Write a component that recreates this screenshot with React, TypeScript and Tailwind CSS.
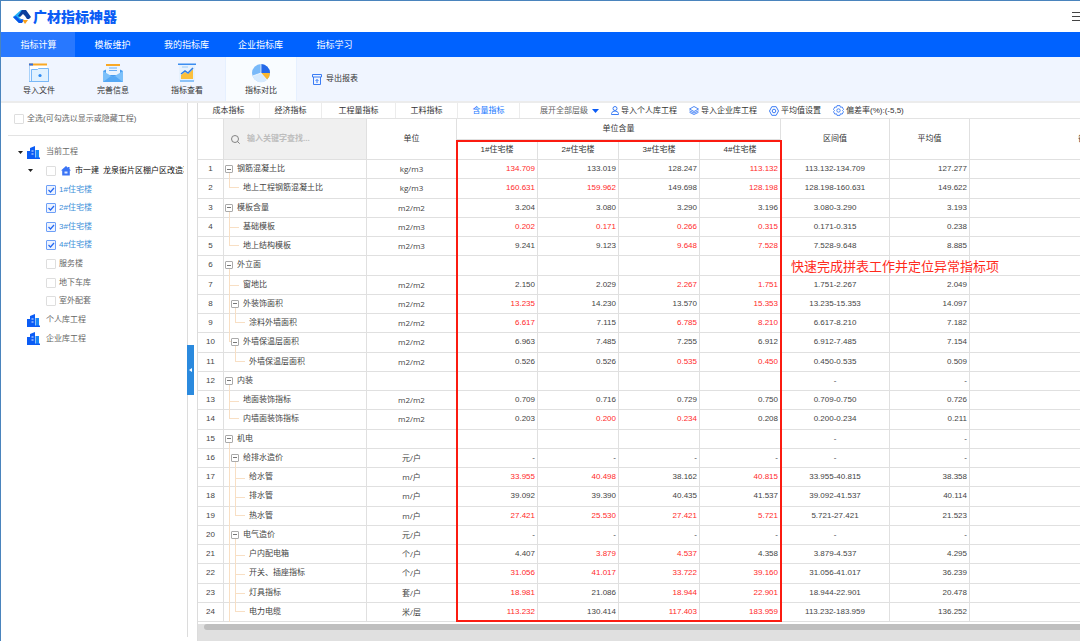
import type { ReactNode } from 'react';

type Cell = string;

interface Row {
  name: string;
  level: number;
  unit: string;
  values: Cell[];
  range: string;
  avg: string;
  parent?: boolean;
  // guide lines drawn in the name column, one entry per depth
  guides?: Array<'line' | 'tee' | 'end' | 'none'>;
}

// a leading "!" marks a value that is out of the allowed deviation
const ROWS: Row[] = [
  { name: '钢筋混凝土比', level: 0, parent: true, unit: 'kg/m3', values: ['!134.709', '133.019', '128.247', '!113.132'], range: '113.132-134.709', avg: '127.277' },
  { name: '地上工程钢筋混凝土比', level: 1, guides: ['end'], unit: 'kg/m3', values: ['!160.631', '!159.962', '149.698', '!128.198'], range: '128.198-160.631', avg: '149.622' },
  { name: '模板含量', level: 0, parent: true, unit: 'm2/m2', values: ['3.204', '3.080', '3.290', '3.196'], range: '3.080-3.290', avg: '3.193' },
  { name: '基础模板', level: 1, guides: ['tee'], unit: 'm2/m3', values: ['!0.202', '!0.171', '!0.266', '!0.315'], range: '0.171-0.315', avg: '0.238' },
  { name: '地上结构模板', level: 1, guides: ['end'], unit: 'm2/m3', values: ['9.241', '9.123', '!9.648', '!7.528'], range: '7.528-9.648', avg: '8.885' },
  { name: '外立面', level: 0, parent: true, unit: '', values: ['', '', '', ''], range: '', avg: '' },
  { name: '窗地比', level: 1, guides: ['tee'], unit: 'm2/m2', values: ['2.150', '2.029', '!2.267', '!1.751'], range: '1.751-2.267', avg: '2.049' },
  { name: '外装饰面积', level: 1, parent: true, guides: ['line'], unit: 'm2/m2', values: ['!13.235', '14.230', '13.570', '!15.353'], range: '13.235-15.353', avg: '14.097' },
  { name: '涂料外墙面积', level: 2, guides: ['line', 'end'], unit: 'm2/m2', values: ['!6.617', '7.115', '!6.785', '!8.210'], range: '6.617-8.210', avg: '7.182' },
  { name: '外墙保温层面积', level: 1, parent: true, guides: ['end'], unit: 'm2/m2', values: ['6.963', '7.485', '7.255', '6.912'], range: '6.912-7.485', avg: '7.154' },
  { name: '外墙保温层面积', level: 2, guides: ['none', 'end'], unit: 'm2/m2', values: ['0.526', '0.526', '!0.535', '!0.450'], range: '0.450-0.535', avg: '0.509' },
  { name: '内装', level: 0, parent: true, unit: '', values: ['', '', '', ''], range: '-', avg: '-' },
  { name: '地面装饰指标', level: 1, guides: ['tee'], unit: 'm2/m2', values: ['0.709', '0.716', '0.729', '0.750'], range: '0.709-0.750', avg: '0.726' },
  { name: '内墙面装饰指标', level: 1, guides: ['end'], unit: 'm2/m2', values: ['0.203', '!0.200', '!0.234', '0.208'], range: '0.200-0.234', avg: '0.211' },
  { name: '机电', level: 0, parent: true, unit: '', values: ['', '', '', ''], range: '-', avg: '-' },
  { name: '给排水造价', level: 1, parent: true, guides: ['line'], unit: '元/户', values: ['-', '-', '-', '-'], range: '-', avg: '-' },
  { name: '给水管', level: 2, guides: ['line', 'tee'], unit: 'm/户', values: ['!33.955', '!40.498', '38.162', '!40.815'], range: '33.955-40.815', avg: '38.358' },
  { name: '排水管', level: 2, guides: ['line', 'tee'], unit: 'm/户', values: ['39.092', '39.390', '40.435', '41.537'], range: '39.092-41.537', avg: '40.114' },
  { name: '热水管', level: 2, guides: ['line', 'end'], unit: 'm/户', values: ['!27.421', '!25.530', '!27.421', '!5.721'], range: '5.721-27.421', avg: '21.523' },
  { name: '电气造价', level: 1, parent: true, guides: ['line'], unit: '元/户', values: ['-', '-', '-', '-'], range: '-', avg: '-' },
  { name: '户内配电箱', level: 2, guides: ['line', 'tee'], unit: '个/户', values: ['4.407', '!3.879', '!4.537', '4.358'], range: '3.879-4.537', avg: '4.295' },
  { name: '开关、插座指标', level: 2, guides: ['line', 'tee'], unit: '个/户', values: ['!31.056', '!41.017', '!33.722', '!39.160'], range: '31.056-41.017', avg: '36.239' },
  { name: '灯具指标', level: 2, guides: ['line', 'tee'], unit: '套/户', values: ['!18.981', '21.086', '!18.944', '!22.901'], range: '18.944-22.901', avg: '20.478' },
  { name: '电力电缆', level: 2, guides: ['line', 'end'], unit: '米/层', values: ['!113.232', '130.414', '!117.403', '!183.959'], range: '113.232-183.959', avg: '136.252' },
];

const NAV = ['指标计算', '模板维护', '我的指标库', '企业指标库', '指标学习'];

const TABS = [
  { label: '成本指标', width: 'w-[62px]' },
  { label: '经济指标', width: 'w-[62px]' },
  { label: '工程量指标', width: 'w-[74px]' },
  { label: '工料指标', width: 'w-[62px]' },
  { label: '含量指标', width: 'w-[62px]', active: true },
];

const BUILDINGS = [
  { label: '1#住宅楼', checked: true },
  { label: '2#住宅楼', checked: true },
  { label: '3#住宅楼', checked: true },
  { label: '4#住宅楼', checked: true },
  { label: '服务楼', checked: false },
  { label: '地下车库', checked: false },
  { label: '室外配套', checked: false },
];

const INDENT = ['pl-[13px]', 'pl-[19px]', 'pl-[25px]'];
const TOGGLE_LEFT = ['left-px', 'left-[7px]'];
const GUIDE_LEFT = ['left-[5px]', 'left-[11px]'];

function Logo() {
  return (
    <svg className="h-4 w-[18px]" viewBox="0 0 18 16">
      <path d="M8 1h4L6 8l3 3-3 3-6-6z" fill="#1fb0f8" />
      <path d="M0 8l3-1 4 4 2-1 2 1-2 3H6z" fill="#0a55e8" />
      <path d="M9 1h4l5 7-2 2h-2l-2-3-2-2-3 3-2-1z" fill="#0b3f9e" />
      <path d="M9.500 11H15l-3 4z" fill="#f9a01b" />
    </svg>
  );
}

function ImportIcon() {
  return (
    <svg className="h-5 w-[22px]" viewBox="0 0 22 20">
      <path d="M1 1h18v5H1z" fill="#fff" />
      <path d="M1 .500h18v2H1z" fill="#f9a825" />
      <path d="M1 .500h4v2H1z" fill="#2f6fe4" />
      <path d="M1.500 3v15" stroke="#a9d2fa" />
      <path d="M3.500 6.500h6l1-1h10v13h-17z" fill="#e0f1ff" stroke="#79b8f7" />
      <path d="M1 18.500h20" stroke="#79b8f7" />
      <circle cx="12" cy="12.500" r="1.600" fill="#2f8bf2" />
    </svg>
  );
}

function MailIcon() {
  return (
    <svg className="h-5 w-[22px]" viewBox="0 0 22 20">
      <path d="M1 8l10-5 10 5v11H1z" fill="#4a9df0" />
      <path d="M4 2h14v10H4z" fill="#eaf4ff" />
      <path d="M4 1h14v2H4z" fill="#f9a825" />
      <path d="M7 5h8M7 7.500h8" stroke="#6aaef5" />
      <path d="M1 8l10 6 10-6v11H1z" fill="#7cc0fa" />
      <path d="M1 19l8-6 2 1.200 2-1.200 8 6z" fill="#55a8f5" />
    </svg>
  );
}

function ViewIcon() {
  return (
    <svg className="h-5 w-[22px]" viewBox="0 0 22 20">
      <path d="M3 2h16v16H3z" fill="#e6f1fd" />
      <path d="M2 .500h18v1.500H2z" fill="#3b8df0" />
      <path d="M6 4h6" stroke="#9ccbf9" />
      <path d="M4 17h14v2H4z" fill="#8cc2f8" />
      <path d="M5 12l4-3 3 2 5-5v10H5z" fill="#fbbf3c" />
      <path d="M5 11l4-3 3 2 5-5" fill="none" stroke="#2f7fe8" strokeWidth="1.500" />
    </svg>
  );
}

function PieIcon() {
  return (
    <svg className="h-5 w-[22px]" viewBox="0 0 22 20">
      <circle cx="11" cy="10" r="9" fill="#79b9f9" />
      <path d="M11 10 2.500 13a9 9 0 0 0 14.500 4z" fill="#d6eafe" />
      <path d="M11 10V1a9 9 0 0 1 9 9z" fill="#2468e8" />
      <path d="M11 10h9a9 9 0 0 1-3 6.500z" fill="#fbb62c" />
      <path d="M11 1v9l-8.500 3M11 10l6 7" fill="none" stroke="#fff" strokeWidth=".7" />
    </svg>
  );
}

function ExportIcon() {
  return (
    <svg className="h-[11px] w-[10px]" viewBox="0 0 10 11" fill="none" stroke="#3b7cf5">
      <path d="M.500.500h9v2.500h-9zM1.500 3v7.500h7V3M5 9V5.500M3.500 7 5 5.500 6.500 7" />
    </svg>
  );
}

function PersonIcon() {
  return (
    <svg className="h-[9px] w-2" viewBox="0 0 8 9" fill="none" stroke="#3b7cf5">
      <circle cx="4" cy="2.500" r="2" />
      <path d="M.500 8.500V7.500Q1 5 4 5t3.500 2.500v1z" />
    </svg>
  );
}

function LayersIcon() {
  return (
    <svg className="h-[9px] w-[10px]" viewBox="0 0 10 9" fill="none" stroke="#3b7cf5" strokeWidth=".9">
      <path d="M5 .500 9.500 3 5 5.500.500 3zM.500 4.800 5 7l4.500-2.200M.500 6.300 5 8.500l4.500-2.200" />
    </svg>
  );
}

function HexIcon() {
  return (
    <svg className="size-[10px]" viewBox="0 0 10 10" fill="none" stroke="#3b7cf5">
      <path d="M2.800.700h4.400L9.500 5 7.200 9.300H2.800L.500 5z" />
      <circle cx="5" cy="5" r="1.800" />
    </svg>
  );
}

function GearIcon() {
  return (
    <svg className="size-[11px]" viewBox="0 0 11 11" fill="none" stroke="#3b7cf5" strokeWidth=".9">
      <path d="M4 .600h3l.4 1.600 1.800-.2 1.300 2.500L9.500 5.500l1 1.200-1.300 2.400-1.800-.3L7 10.400H4l-.4-1.600-1.800.3L.500 6.700l1-1.200-1-1L1.800 2l1.800.2z" />
      <circle cx="5.500" cy="5.500" r="1.700" />
    </svg>
  );
}

function BuildingIcon() {
  return (
    <svg className="size-[13px]" viewBox="0 0 13 13">
      <path d="M0 5h3v7H0zM3 2l5-2v12H3z" fill="#0b5cf5" />
      <path d="M8.500 4H12v8H8.500z" fill="#1a86f7" />
      <path d="M0 11.500h13V13H0z" fill="#0b5cf5" />
      <path d="M4.500 5h2M4.500 8h2" stroke="#fff" strokeWidth=".9" />
    </svg>
  );
}

function HomeIcon() {
  return (
    <svg className="size-[10px]" viewBox="0 0 10 10">
      <path d="M5 0 0 4.500h1.200V9.500h7.600V4.500H10L8.500 3V1H7v.800z" fill="#3a74f5" />
      <path d="M3.500 5.500h3v2h-3z" fill="#dbe7ff" />
    </svg>
  );
}

function Caret({ className }: { className: string }) {
  return (
    <svg className={className} viewBox="0 0 7 4">
      <path d="M0 0h7L3.500 4z" fill="currentColor" />
    </svg>
  );
}

function Checkbox({ label, checked, children, className = '' }: { label?: string; checked?: boolean; children?: ReactNode; className?: string }) {
  return (
    <label className={`flex items-center whitespace-nowrap ${className}`}>
      <span className="relative flex size-[10px] shrink-0">
        <input
          type="checkbox"
          defaultChecked={checked}
          aria-label={label}
          className="peer size-[10px] appearance-none rounded-[1px] border border-[#dedede] bg-white checked:border-[#6d9ff7] checked:bg-[#edf3ff]"
        />
        <svg className="pointer-events-none absolute inset-0 hidden size-[10px] peer-checked:block" viewBox="0 0 10 10">
          <path d="M2.500 5l2 2 3.500-4" fill="none" stroke="#2468f2" strokeWidth="1.200" />
        </svg>
      </span>
      {children}
    </label>
  );
}

function ToolButton({ icon, label, active }: { icon: ReactNode; label: string; active?: boolean }) {
  return (
    <button className={`flex w-[72px] flex-col items-center gap-[3px] pt-1.5 text-[#333] ${active ? 'border-x border-[#e6f0ff] bg-[#f9fcff]' : ''}`}>
      {icon}
      <span className="leading-[10px]">{label}</span>
    </button>
  );
}

function Sidebar() {
  return (
    <aside className="mb-1 flex w-[187px] shrink-0 flex-col overflow-hidden border-r border-[#dcdcdc] pl-[7px] text-[#666]">
      <div className="flex h-[33px] items-center border-b border-[#e3e3e3] pl-1.5">
        <Checkbox>
          <span className="pl-[3px]">全选(可勾选以显示或隐藏工程)</span>
        </Checkbox>
      </div>
      <div className="mt-[7px] grid h-[205px] auto-rows-fr">
        <div className="flex items-center pl-2.5">
          <Caret className="h-[3px] w-[5px] text-[#222]" />
          <span className="flex pr-1.5 pl-1"><BuildingIcon /></span>
          <span>当前工程</span>
        </div>
        <div className="flex items-center overflow-hidden pr-[3px] pl-5 text-[#111]">
          <Caret className="h-[3px] w-[5px] shrink-0 text-[#222]" />
          <Checkbox className="ml-[13px]" label="市一建" />
          <span className="shrink-0 px-1 pl-[5px]"><HomeIcon /></span>
          <span className="flex gap-1 overflow-hidden whitespace-nowrap">
            <span>市一建</span>
            <span>龙泉街片区棚户区改造项目</span>
          </span>
        </div>
        {BUILDINGS.map((b) => (
          <Checkbox key={b.label} checked={b.checked} className="pl-[38px]">
            <span className={`pl-[3px] ${b.checked ? 'text-[#3d8fd9]' : ''}`}>{b.label}</span>
          </Checkbox>
        ))}
        {['个人库工程', '企业库工程'].map((label) => (
          <div key={label} className="flex items-center gap-1.5 pl-[19px]">
            <BuildingIcon />
            <span>{label}</span>
          </div>
        ))}
      </div>
    </aside>
  );
}

function TreeGuides({ guides = [], parent, level }: Pick<Row, 'guides' | 'parent' | 'level'>) {
  return (
    <>
      {guides.map((g, i) =>
        g === 'none' ? null : (
          <span key={i} className={`absolute top-0 w-3 ${GUIDE_LEFT[i]} ${g === 'end' ? 'h-1/2' : '-bottom-px'}`}>
            <span className="absolute inset-y-0 left-0 border-l border-[#f8dfc4]" />
            {g !== 'line' && (
              <span className={`absolute left-0 border-t border-[#f8dfc4] ${parent ? 'w-0.5' : 'w-2.5'} ${g === 'end' ? 'bottom-0' : 'top-1/2'}`} />
            )}
          </span>
        ),
      )}
      {parent && <span className={`absolute top-1/2 -bottom-px border-l border-[#f8dfc4] ${GUIDE_LEFT[level]}`} />}
    </>
  );
}

const cell = 'border-r border-b border-[#e0e0e0] p-0';

function IndicatorTable() {
  return (
    <table className="h-full w-[1005px] table-fixed border-separate border-spacing-0 text-[#444]">
      <colgroup>
        <col className="w-[26px]" />
        <col className="w-[143px]" />
        <col className="w-[90px]" />
        <col className="w-[81px]" />
        <col className="w-[81px]" />
        <col className="w-[81px]" />
        <col className="w-[81px]" />
        <col className="w-[109px]" />
        <col className="w-20" />
        <col className="w-[233px]" />
      </colgroup>
      <thead className="text-[#333]">
        <tr className="h-[21px]">
          <th rowSpan={2} className={cell} />
          <th rowSpan={2} className={`${cell} bg-[#f0f0f0]`}>
            <label className="flex items-center gap-[7px] pl-[7px]">
              <svg className="size-[9px] shrink-0" viewBox="0 0 9 9" fill="none" stroke="#777" strokeWidth=".9">
                <circle cx="4" cy="4" r="3.500" />
                <path d="M6.500 6.500 8.700 8.700" />
              </svg>
              <input
                aria-label="查找"
                placeholder="输入关键字查找..."
                className="w-24 bg-transparent outline-none placeholder:text-[#bdbdbd]"
              />
            </label>
          </th>
          <th rowSpan={2} className={`${cell} font-normal`}>单位</th>
          <th colSpan={4} className={`${cell} font-normal`}>单位含量</th>
          <th rowSpan={2} className={`${cell} font-normal`}>区间值</th>
          <th rowSpan={2} className={`${cell} font-normal`}>平均值</th>
          <th rowSpan={2} className={`${cell} font-normal`}>备注</th>
        </tr>
        <tr className="h-5">
          {BUILDINGS.slice(0, 4).map((b) => (
            <th key={b.label} className={`${cell} font-normal`}>{b.label}</th>
          ))}
        </tr>
      </thead>
      <tbody>
        {ROWS.map((row, i) => (
          <tr key={i}>
            <td className={`${cell} text-center`}>{i + 1}</td>
            <td className={`${cell} relative whitespace-nowrap ${INDENT[row.level]}`}>
              <TreeGuides guides={row.guides} parent={row.parent} level={row.level} />
              {row.parent && (
                <button
                  aria-label="折叠"
                  className={`absolute inset-y-0 my-auto flex size-2 items-center justify-center rounded-[1px] border border-[#aaa] bg-white ${TOGGLE_LEFT[row.level]}`}
                >
                  <span className="w-1 border-t border-[#777]" />
                </button>
              )}
              {row.name}
            </td>
            <td className={`${cell} text-center font-['Open_Sans','Noto_Sans_CJK_SC',sans-serif]`}>{row.unit}</td>
            {row.values.map((v, j) => (
              <td key={j} className={`${cell} pr-0.5 text-right ${v.startsWith('!') ? 'text-[#ff2a2a]' : ''}`}>
                {v.replace('!', '')}
              </td>
            ))}
            <td className={`${cell} text-center`}>{row.range}</td>
            <td className={`${cell} pr-0.5 text-right`}>{row.avg}</td>
            <td className={cell} />
          </tr>
        ))}
      </tbody>
    </table>
  );
}

export default function App() {
  return (
    <div className="flex h-screen flex-col overflow-hidden border-t border-l border-[#4a84bd] bg-white font-['Liberation_Sans','Noto_Sans_CJK_SC',sans-serif] text-[8px] leading-[12px]">
      <header className="flex h-[31px] shrink-0 items-center justify-between pl-3">
        <div className="flex items-center gap-0.5">
          <Logo />
          <h1 className="text-[14px] leading-5 font-black text-[#0b5cf5]">广材指标神器</h1>
        </div>
        <button aria-label="菜单" className="w-2 overflow-hidden">
          <svg className="h-[10px] w-3" viewBox="0 0 12 10" stroke="#444">
            <path d="M0 .500h12M0 4.500h12M0 8.500h12" />
          </svg>
        </button>
      </header>

      <nav className="flex h-[25px] shrink-0 bg-[#0062ff] text-[9px] text-white">
        {NAV.map((label, i) => (
          <a key={label} href="#" className={`flex w-[74px] items-center justify-center pl-px ${i === 0 ? 'bg-[#2878ff]' : ''}`}>
            {label}
          </a>
        ))}
      </nav>

      <div className="flex h-[46px] shrink-0 gap-0.5 border-b-2 border-[#ececec] bg-[#f0f5ff] pl-0.5">
        <ToolButton icon={<ImportIcon />} label="导入文件" />
        <ToolButton icon={<MailIcon />} label="完善信息" />
        <ToolButton icon={<ViewIcon />} label="指标查看" />
        <ToolButton icon={<PieIcon />} label="指标对比" active />
        <button className="flex items-center gap-1 pl-[13px] text-[#333]">
          <ExportIcon />
          导出报表
        </button>
      </div>

      <div className="flex min-h-0 flex-1">
        <Sidebar />
        <div className="flex w-[9px] shrink-0 flex-col justify-center pb-1">
          <button aria-label="收起" className="-ml-px flex h-[50px] w-[7px] items-center justify-center bg-[#2b8ade] text-white">
            <svg className="h-1 w-[3px]" viewBox="0 0 3 4">
              <path d="M3 0v4L0 2z" fill="currentColor" />
            </svg>
          </button>
        </div>

        <main className="flex min-w-0 flex-1 flex-col border-l border-[#dcdcdc]">
          <div className="flex h-4 shrink-0 border-b border-[#e3e3e3] text-[#333]">
            {TABS.map((t) => (
              <button key={t.label} className={`border-r border-[#ececec] ${t.width} ${t.active ? 'text-[#1677ff]' : ''}`}>
                {t.label}
              </button>
            ))}
            <div className="flex items-center gap-3 pl-5">
              <button className="flex items-center gap-1 text-[#666]">
                展开全部层级
                <Caret className="h-1 w-[7px] text-[#0b5cf5]" />
              </button>
              <button className="flex items-center gap-0.5"><PersonIcon />导入个人库工程</button>
              <button className="flex items-center gap-0.5"><LayersIcon />导入企业库工程</button>
              <button className="flex items-center gap-0.5"><HexIcon />平均值设置</button>
              <button className="flex items-center gap-0.5"><GearIcon />偏差率(%):(-5,5)</button>
            </div>
          </div>

          <div className="relative min-h-0 flex-1 overflow-hidden pb-0.5">
            <IndicatorTable />
            {/* highlighted block over the four building columns */}
            <div className="pointer-events-none absolute top-[21px] bottom-0.5 left-[258px] w-[326px] border-2 border-[#fb1b10]" />
            <p className="pointer-events-none absolute top-[138px] left-[593px] text-[13px] leading-5 whitespace-nowrap text-[#ff2a1c]">
              快速完成拼表工作并定位异常指标项
            </p>
          </div>

          <div className="h-[17px] shrink-0 bg-[#e0e0e0]">
            <div className="ml-1.5 h-1.5 rounded-l-full bg-[#bfbfbf]" />
          </div>
        </main>
      </div>
    </div>
  );
}
